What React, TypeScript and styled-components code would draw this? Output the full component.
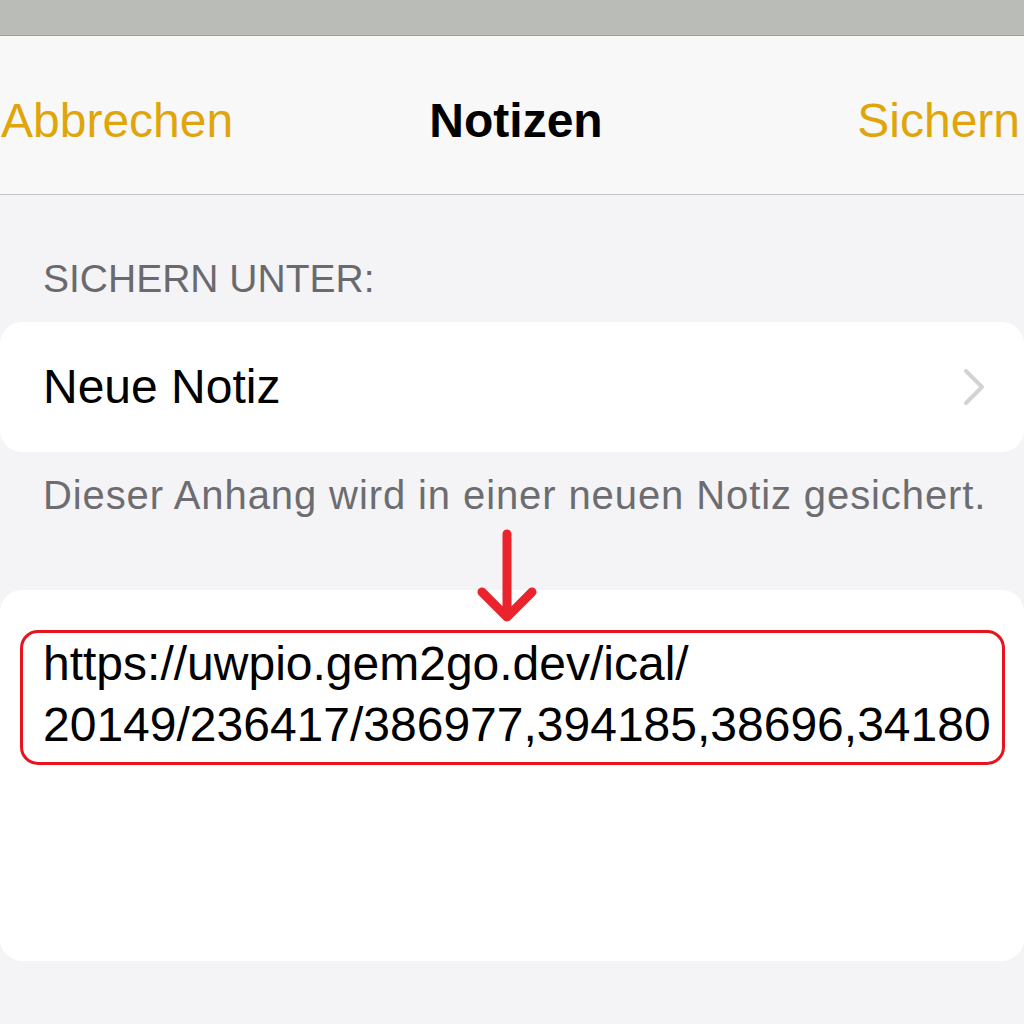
import React from "react";
import styled, { createGlobalStyle } from "styled-components";

const GlobalStyle = createGlobalStyle`
  html, body {
    margin: 0;
    padding: 0;
    background: #f4f4f6;
  }
  body {
    font-family: "Liberation Sans", Arial, sans-serif;
    -webkit-font-smoothing: antialiased;
  }
  * { box-sizing: border-box; }
`;

const Page = styled.div`
  position: relative;
  width: 1024px;
  height: 1024px;
  overflow: hidden;
  background: #f4f4f6;
  display: flex;
  flex-direction: column;
`;

const StatusStrip = styled.div`
  height: 36px;
  flex-shrink: 0;
  background: #babcb7;
  border-bottom: 1px solid #9d9f9b;
`;

const NavBar = styled.header`
  height: 159px;
  flex-shrink: 0;
  padding-top: 12px;
  background: #f8f8f8;
  border-bottom: 1px solid #c3c3c3;
  display: grid;
  grid-template-columns: 1fr auto 1fr;
  align-items: center;
`;

const NavButton = styled.span<{ $align: "left" | "right" }>`
  font-size: 48px;
  line-height: 48px;
  color: #dfa50b;
  justify-self: ${(p) => (p.$align === "left" ? "start" : "end")};
  padding: ${(p) => (p.$align === "left" ? "0 0 0 1px" : "0 4px 0 0")};
`;

const NavTitle = styled.h1`
  margin: 0;
  padding-left: 8px;
  font-size: 48px;
  line-height: 48px;
  font-weight: 700;
  color: #000;
`;

const Content = styled.main`
  display: flex;
  flex-direction: column;
`;

const SectionHeader = styled.div`
  margin: 64px 0 24px;
  padding-left: 43px;
  font-size: 39px;
  line-height: 39px;
  color: #6a6a6e;
`;

const Card = styled.section<{ $height: number }>`
  height: ${(p) => p.$height}px;
  background: #ffffff;
  border-radius: 22px;
`;

const RowCard = styled(Card)`
  display: flex;
  align-items: center;
  justify-content: space-between;
  padding: 0 38px 0 43px;
`;

const RowLabel = styled.span`
  font-size: 48px;
  line-height: 48px;
  color: #000;
`;

const Chevron = styled.svg`
  width: 24px;
  height: 40px;
  display: block;
`;

const SectionFooter = styled.div`
  margin: 23px 0 75px;
  padding-left: 43px;
  font-size: 40px;
  line-height: 40px;
  letter-spacing: 0.9px;
  color: #6d6d71;
  white-space: nowrap;
`;

const NoteCard = styled(Card)`
  padding: 40px 19px 0 20px;
`;

const Highlight = styled.div`
  border: 3px solid #e8141d;
  border-radius: 18px;
  padding: 0 0 7px 20px;
`;

const UrlLine = styled.div`
  font-size: 48px;
  line-height: 61px;
  color: #000;
  white-space: nowrap;
`;

const ArrowMark = styled.svg`
  position: absolute;
  left: 477px;
  top: 524px;
  width: 60px;
  height: 100px;
`;

export default function App() {
  return (
    <>
      <GlobalStyle />
      <Page>
        <StatusStrip />
        <NavBar>
          <NavButton $align="left">Abbrechen</NavButton>
          <NavTitle>Notizen</NavTitle>
          <NavButton $align="right">Sichern</NavButton>
        </NavBar>
        <Content>
          <SectionHeader>SICHERN UNTER:</SectionHeader>
          <RowCard $height={130}>
            <RowLabel>Neue Notiz</RowLabel>
            <Chevron viewBox="0 0 24 40">
              <path
                d="M4 4 L20 20 L4 36"
                fill="none"
                stroke="#d3d3d6"
                strokeWidth="4"
                strokeLinecap="round"
                strokeLinejoin="round"
              />
            </Chevron>
          </RowCard>
          <SectionFooter>Dieser Anhang wird in einer neuen Notiz gesichert.</SectionFooter>
          <NoteCard $height={371}>
            <Highlight>
              <UrlLine>https://uwpio.gem2go.dev/ical/</UrlLine>
              <UrlLine>20149/236417/386977,394185,38696,34180</UrlLine>
            </Highlight>
          </NoteCard>
        </Content>
        <ArrowMark viewBox="0 0 60 100">
          <path
            d="M30 10 L30 90 M5 68 L30 93 L55 68"
            fill="none"
            stroke="#ea232c"
            strokeWidth="9"
            strokeLinecap="round"
            strokeLinejoin="round"
          />
        </ArrowMark>
      </Page>
    </>
  );
}
